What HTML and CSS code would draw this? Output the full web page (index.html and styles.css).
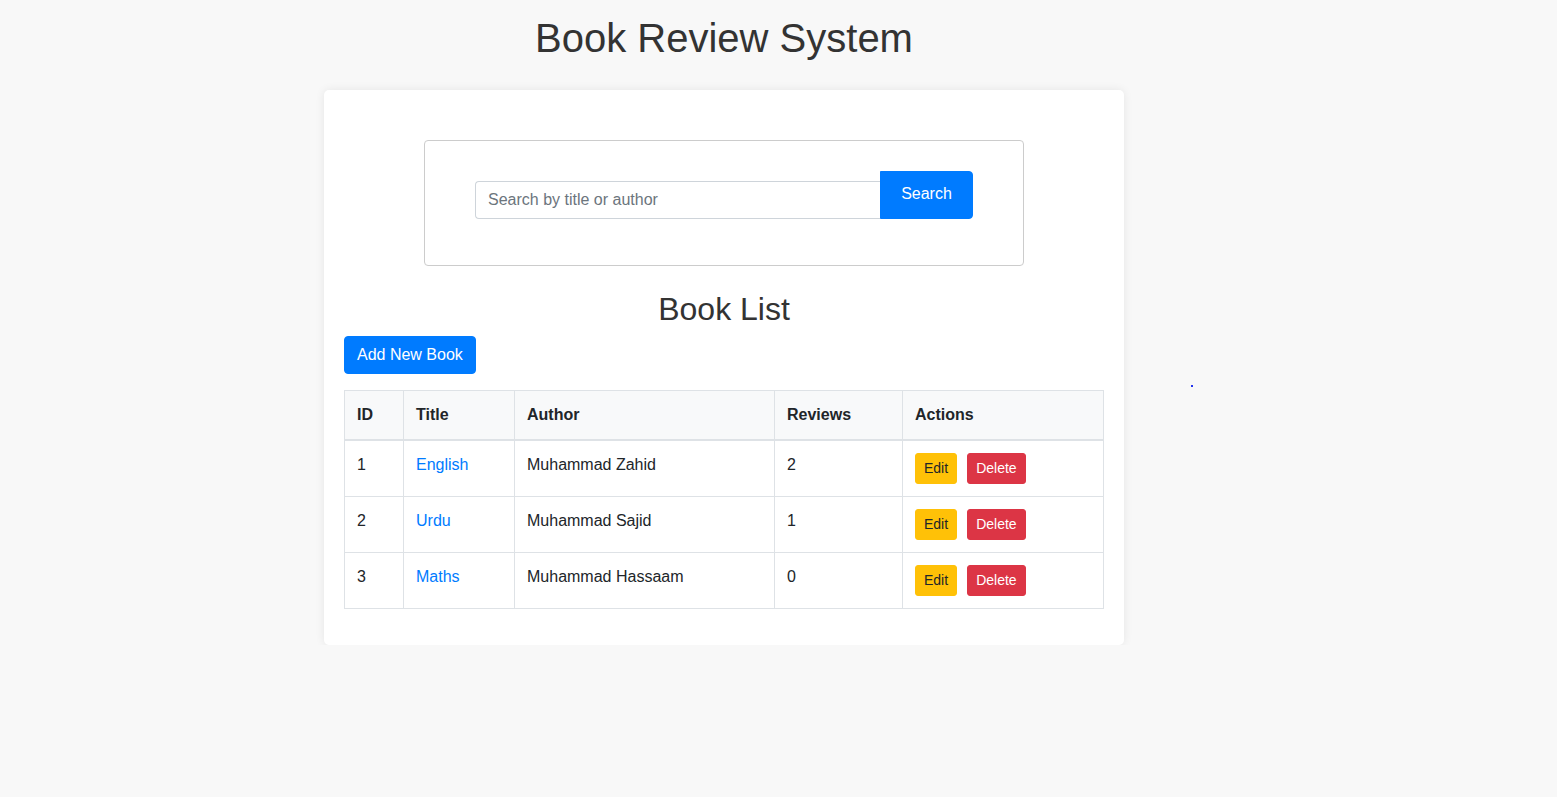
FILE: index.html
```html
<!DOCTYPE html>
<html lang="en">
<head>
<meta charset="utf-8">
<title>Book Review System</title>
<link rel="stylesheet" href="styles.css">
</head>
<body>
<div class="page">
  <h1 class="page-title">Book Review System</h1>
  <div class="card">
    <div class="search-box">
      <form class="search-form">
        <input class="search-input" type="text" placeholder="Search by title or author">
        <button class="btn btn-primary search-btn" type="button">Search</button>
      </form>
    </div>
    <h2 class="list-title">Book List</h2>
    <button class="btn btn-primary add-btn" type="button">Add New Book</button>
    <table class="table">
      <colgroup>
        <col class="c-id"><col class="c-title"><col class="c-author"><col class="c-reviews"><col class="c-actions">
      </colgroup>
      <thead>
        <tr><th>ID</th><th>Title</th><th>Author</th><th>Reviews</th><th>Actions</th></tr>
      </thead>
      <tbody>
        <tr><td>1</td><td><a href="#">English</a></td><td>Muhammad Zahid</td><td>2</td><td><span class="btn-sm btn-warning">Edit</span><span class="btn-sm btn-danger">Delete</span></td></tr>
        <tr><td>2</td><td><a href="#">Urdu</a></td><td>Muhammad Sajid</td><td>1</td><td><span class="btn-sm btn-warning">Edit</span><span class="btn-sm btn-danger">Delete</span></td></tr>
        <tr><td>3</td><td><a href="#">Maths</a></td><td>Muhammad Hassaam</td><td>0</td><td><span class="btn-sm btn-warning">Edit</span><span class="btn-sm btn-danger">Delete</span></td></tr>
      </tbody>
    </table>
  </div>
</div>
<span class="dot"></span>
</body>
</html>
```
FILE: styles.css
```css
* { box-sizing: border-box; }
html, body { margin: 0; padding: 0; }
body {
  background: #f8f8f8;
  font-family: "Liberation Sans", Arial, sans-serif;
  font-size: 16px;
  line-height: 1.5;
  color: #212529;
}
.page {
  width: 1448px;
  display: flex;
  flex-direction: column;
  align-items: center;
}
.page-title {
  font-size: 40px;
  font-weight: 400;
  line-height: 1.2;
  color: #333;
  margin: 14px 0 28px;
}
.card {
  width: 800px;
  background: #fff;
  border-radius: 5px;
  box-shadow: 0 0 10px rgba(0,0,0,0.08);
  padding: 20px;
}
.search-box {
  width: 600px;
  margin: 30px auto 0;
  border: 1px solid #ccc;
  border-radius: 4px;
  padding: 30px 50px 46px;
}
.search-form {
  display: flex;
  align-items: flex-end;
}
.search-input {
  width: 405px;
  height: 38px;
  border: 1px solid #ced4da;
  border-right: none;
  border-radius: 4px 0 0 4px;
  padding: 6px 12px;
  font-family: inherit;
  font-size: 16px;
  color: #495057;
  outline: none;
}
.search-input::placeholder { color: #6c757d; }
.btn {
  font-family: inherit;
  font-size: 16px;
  line-height: 24px;
  border: 1px solid transparent;
  border-radius: 4px;
  padding: 6px 12px;
  cursor: pointer;
}
.btn-primary { background: #007bff; border-color: #007bff; color: #fff; }
.search-btn {
  width: 93px;
  height: 48px;
  border-radius: 0 4px 4px 0;
  padding-bottom: 8px;
}
.list-title {
  text-align: center;
  font-size: 32px;
  font-weight: 400;
  line-height: 1.2;
  color: #333;
  margin: 24px 0 8px;
}
.add-btn { display: block; height: 38px; }
.table {
  width: 759px;
  margin: 16px 0 16px;
  border-collapse: collapse;
  table-layout: fixed;
}
.c-id { width: 59px; }
.c-title { width: 111px; }
.c-author { width: 260px; }
.c-reviews { width: 128px; }
.c-actions { width: 201px; }
.table th, .table td {
  border: 1px solid #dee2e6;
  padding: 12px;
  text-align: left;
  vertical-align: top;
}
.table th {
  background: #f8f9fa;
  font-weight: 700;
  border-bottom: 2px solid #dee2e6;
  color: #212529;
}
.table a { color: #007bff; text-decoration: none; }
.btn-sm {
  display: inline-block;
  font-size: 14px;
  line-height: 21px;
  padding: 4px 8px;
  border: 1px solid transparent;
  border-radius: 3px;
}
.btn-warning { background: #ffc107; border-color: #ffc107; color: #212529; margin-right: 10px; }
.btn-danger { background: #dc3545; border-color: #dc3545; color: #fff; }
.dot {
  position: absolute;
  left: 1191px;
  top: 385px;
  width: 2px;
  height: 2px;
  background: #2233ee;
}
```
